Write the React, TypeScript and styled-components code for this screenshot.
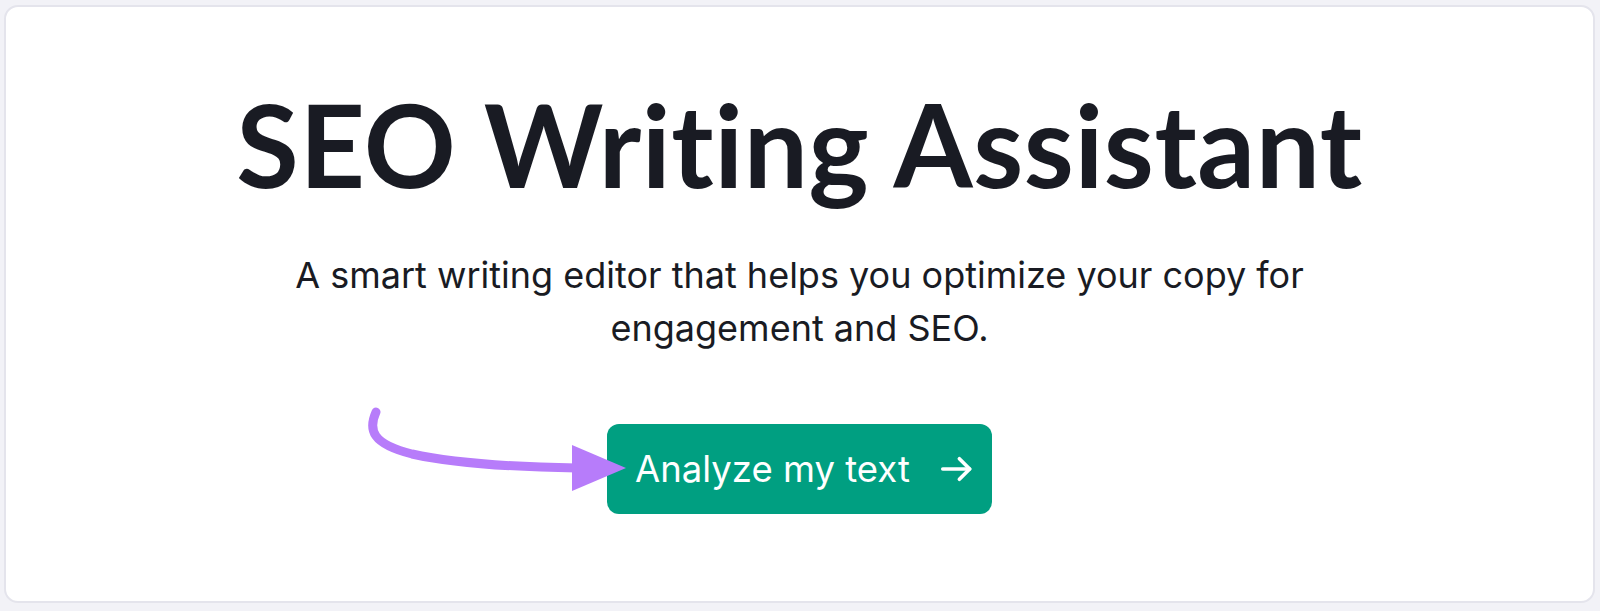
import React from 'react';
import styled, { createGlobalStyle } from 'styled-components';

const GlobalStyle = createGlobalStyle`
  html, body {
    margin: 0;
    padding: 0;
    background: #f2f2f7;
  }
  * {
    box-sizing: border-box;
  }
`;

const Page = styled.div`
  width: 1600px;
  height: 611px;
  padding: 5px 5px 8px 4px;
  background: #f2f2f7;
`;

const Card = styled.div`
  height: 100%;
  background: #ffffff;
  border: 2px solid #e4e4ec;
  border-radius: 14px;
  display: flex;
  flex-direction: column;
  align-items: center;
  padding-top: 69px;
`;

const Title = styled.h1`
  margin: 0;
  font-family: 'Lato', 'Inter', sans-serif;
  font-weight: 700;
  font-size: 114px;
  line-height: 1.2;
  color: #191b23;
  letter-spacing: 0.5px;
`;

const Subtitle = styled.p`
  margin: 36px 0 0 0;
  max-width: 1060px;
  text-align: center;
  font-family: 'Inter', sans-serif;
  font-size: 36px;
  line-height: 53px;
  color: #191b23;
`;

const ActionRow = styled.div`
  position: relative;
  margin-top: 69px;
`;

const Button = styled.button`
  display: flex;
  align-items: center;
  gap: 28px;
  height: 90px;
  padding: 0 16px 0 28px;
  background: #009f81;
  border: none;
  border-radius: 12px;
  color: #ffffff;
  font-family: 'Inter', sans-serif;
  font-weight: 400;
  font-size: 36.5px;
  cursor: pointer;
`;

const Pointer = styled.svg`
  position: absolute;
  left: -245px;
  top: -20px;
  overflow: visible;
`;

const ArrowIcon = () => (
  <svg width="38" height="38" viewBox="0 0 24 24" fill="none" stroke="currentColor" strokeWidth="2.3" strokeLinecap="round" strokeLinejoin="round">
    <path d="M3 12h17" />
    <path d="M13.5 5.5l6.5 6.5-6.5 6.5" />
  </svg>
);

export default function App() {
  return (
    <>
      <GlobalStyle />
      <Page>
        <Card>
          <Title>SEO Writing Assistant</Title>
          <Subtitle>
            A smart writing editor that helps you optimize your copy for engagement and SEO.
          </Subtitle>
          <ActionRow>
            <Pointer width="270" height="90" viewBox="0 0 270 90">
              <path
                d="M14 8 C 6 26, 10 40, 50 50 C 90 59, 150 63, 215 64"
                fill="none"
                stroke="#b77cfa"
                strokeWidth="9"
                strokeLinecap="round"
              />
              <polygon points="210,41 264,64 210,87" fill="#b77cfa" />
            </Pointer>
            <Button>
              Analyze my text
              <ArrowIcon />
            </Button>
          </ActionRow>
        </Card>
      </Page>
    </>
  );
}
